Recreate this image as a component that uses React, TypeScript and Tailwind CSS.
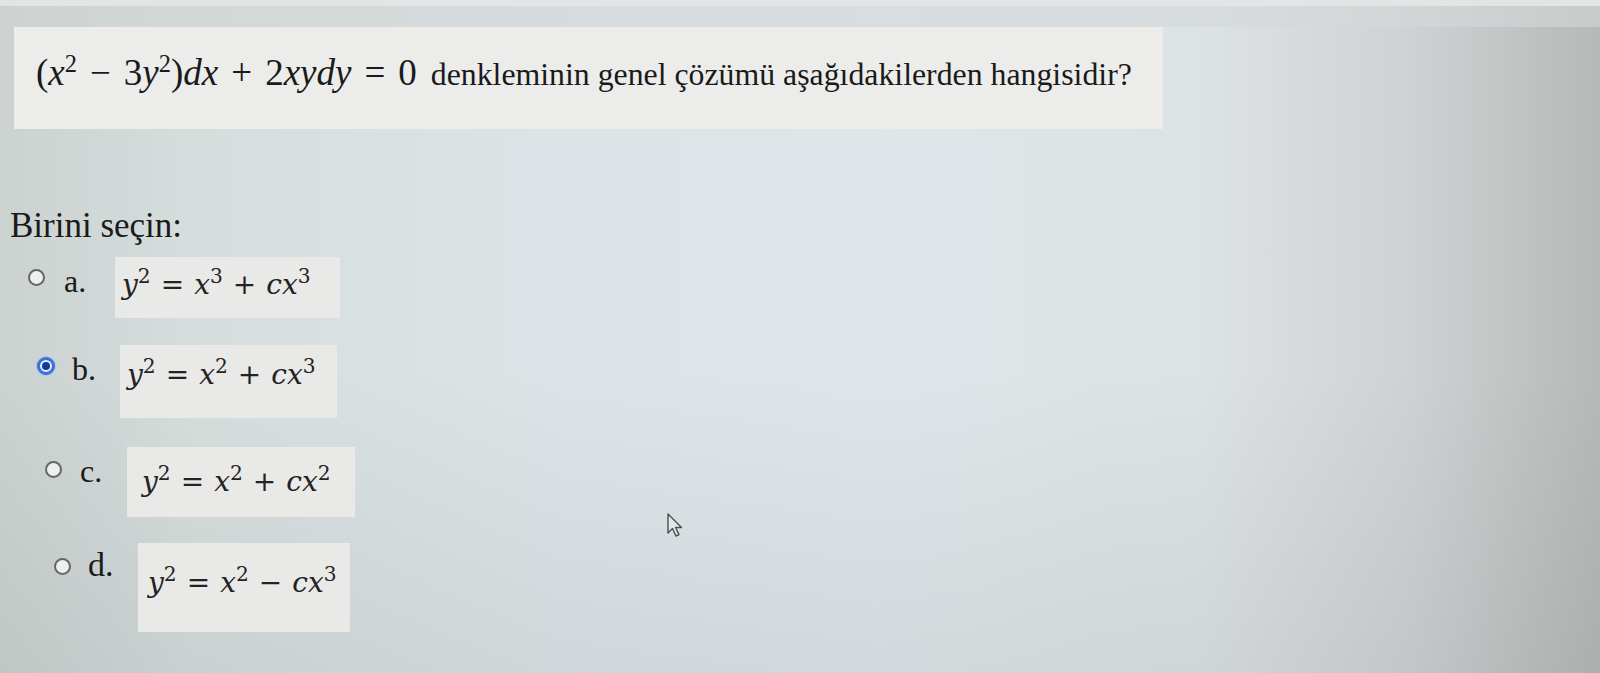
import React from "react";

const serif = { fontFamily: '"Liberation Serif", "Times New Roman", serif' };

function Radio({ checked }: { checked?: boolean }) {
  if (checked) {
    return (
      <span className="flex h-[18px] w-[18px] items-center justify-center rounded-full border-[3px] border-[#3a72e3] bg-[#e9eefb] shadow-[0_0_2px_#6f97ea]">
        <span className="h-[8px] w-[8px] rounded-full bg-[#17379c]" />
      </span>
    );
  }
  return <span className="block h-[17px] w-[17px] rounded-full border-[2px] border-[#656766] bg-[#eef0ef]" />;
}

function Sup({ children, cls }: { children: React.ReactNode; cls?: string }) {
  return <span className={"relative not-italic " + (cls ?? "-top-[0.55em] text-[0.72em]")}>{children}</span>;
}

function OptMath({ a, b, op, c }: { a: string; b: string; op: string; c: string }) {
  return (
    <span className="block whitespace-nowrap text-[28px] leading-[28px] text-[#232323]" style={{ fontFamily: '"DejaVu Serif", serif' }}>
      <i>y</i>
      <Sup>{a}</Sup>
      <span className="mx-[10px]">=</span>
      <i>x</i>
      <Sup>{b}</Sup>
      <span className="mx-[10px]">{op}</span>
      <i>cx</i>
      <Sup>{c}</Sup>
    </span>
  );
}

export default function App() {
  return (
    <div
      className="relative h-[673px] w-[1600px] overflow-hidden bg-[linear-gradient(180deg,rgba(0,0,0,0)_55%,rgba(40,45,45,0.07)_100%),linear-gradient(90deg,#cbd2d0_0%,#d5dddd_12%,#dce4e7_35%,#dfe6e9_55%,#dde2e4_75%,#cfd2d3_88%,#b7b8b8_100%)] text-[#1a1a1a]"
      style={serif}
    >
      <div className="h-[6px] w-full bg-[#e3e5e4]" />
      <div className="h-[21px] w-full bg-[linear-gradient(90deg,#cfd3d2_0%,#d3d8d9_50%,#d4d8da_100%)] opacity-60" />
      {/* Question box */}
      <div className="ml-[14px] flex h-[102px] w-[1149px] items-start bg-[#ecedea] pl-[22px] pt-[26px]">
        <span className="flex items-baseline whitespace-nowrap leading-[40px]">
          <span className="text-[37px]">
            (<i>x</i>
            <Sup cls="-top-[0.55em] text-[0.66em]">2</Sup>
            <span className="mx-[13px]">−</span>3<i>y</i>
            <Sup cls="-top-[0.55em] text-[0.66em]">2</Sup>)<i>dx</i>
            <span className="mx-[13px]">+</span>2<i>xydy</i>
            <span className="mx-[13px]">=</span>0
          </span>
          <span className="ml-[14px] text-[31.8px]">denkleminin genel çözümü aşağıdakilerden hangisidir?</span>
        </span>
      </div>

      {/* Birini seçin */}
      <div className="ml-[10px] mt-[77px] text-[35px] leading-[40px]">Birini seçin:</div>

      {/* option a */}
      <div className="mt-[11px] flex items-start">
        <div className="ml-[28px] mt-[12px]">
          <Radio />
        </div>
        <div className="ml-[19px] mt-[8px] w-[51px] text-[32px] leading-[32px]">a.</div>
        <div className="h-[61px] w-[225px] bg-[#e9eae7] pl-[7px] pt-[14px]">
          <OptMath a="2" b="3" op="+" c="3" />
        </div>
      </div>

      {/* option b */}
      <div className="mt-[27px] flex items-start">
        <div className="ml-[37px] mt-[12px]">
          <Radio checked />
        </div>
        <div className="ml-[17px] mt-[8px] w-[48px] text-[32px] leading-[32px]">b.</div>
        <div className="h-[73px] w-[217px] bg-[#e9eae7] pl-[7px] pt-[16px]">
          <OptMath a="2" b="2" op="+" c="3" />
        </div>
      </div>

      {/* option c */}
      <div className="mt-[29px] flex items-start">
        <div className="ml-[45px] mt-[14px]">
          <Radio />
        </div>
        <div className="ml-[18px] mt-[8px] w-[47px] text-[32px] leading-[32px]">c.</div>
        <div className="h-[70px] w-[228px] bg-[#e9eae7] pl-[15px] pt-[21px]">
          <OptMath a="2" b="2" op="+" c="2" />
        </div>
      </div>

      {/* option d */}
      <div className="mt-[26px] flex items-start">
        <div className="ml-[54px] mt-[15px]">
          <Radio />
        </div>
        <div className="ml-[17px] mt-[5px] w-[50px] text-[34px] leading-[34px]">d.</div>
        <div className="h-[89px] w-[212px] bg-[#e9eae7] pl-[10px] pt-[26px]">
          <OptMath a="2" b="2" op="−" c="3" />
        </div>
      </div>

      {/* mouse cursor */}
      <svg className="absolute left-[667px] top-[513px]" width="16" height="26" viewBox="0 0 16 26">
        <path
          d="M1 1 L1 20 L5.5 15.5 L9 23 L12 21.6 L8.6 14.5 L14.5 14.5 Z"
          fill="#e2e8ea"
          stroke="#4a4d4e"
          strokeWidth="1.4"
          strokeLinejoin="round"
        />
      </svg>
    </div>
  );
}
